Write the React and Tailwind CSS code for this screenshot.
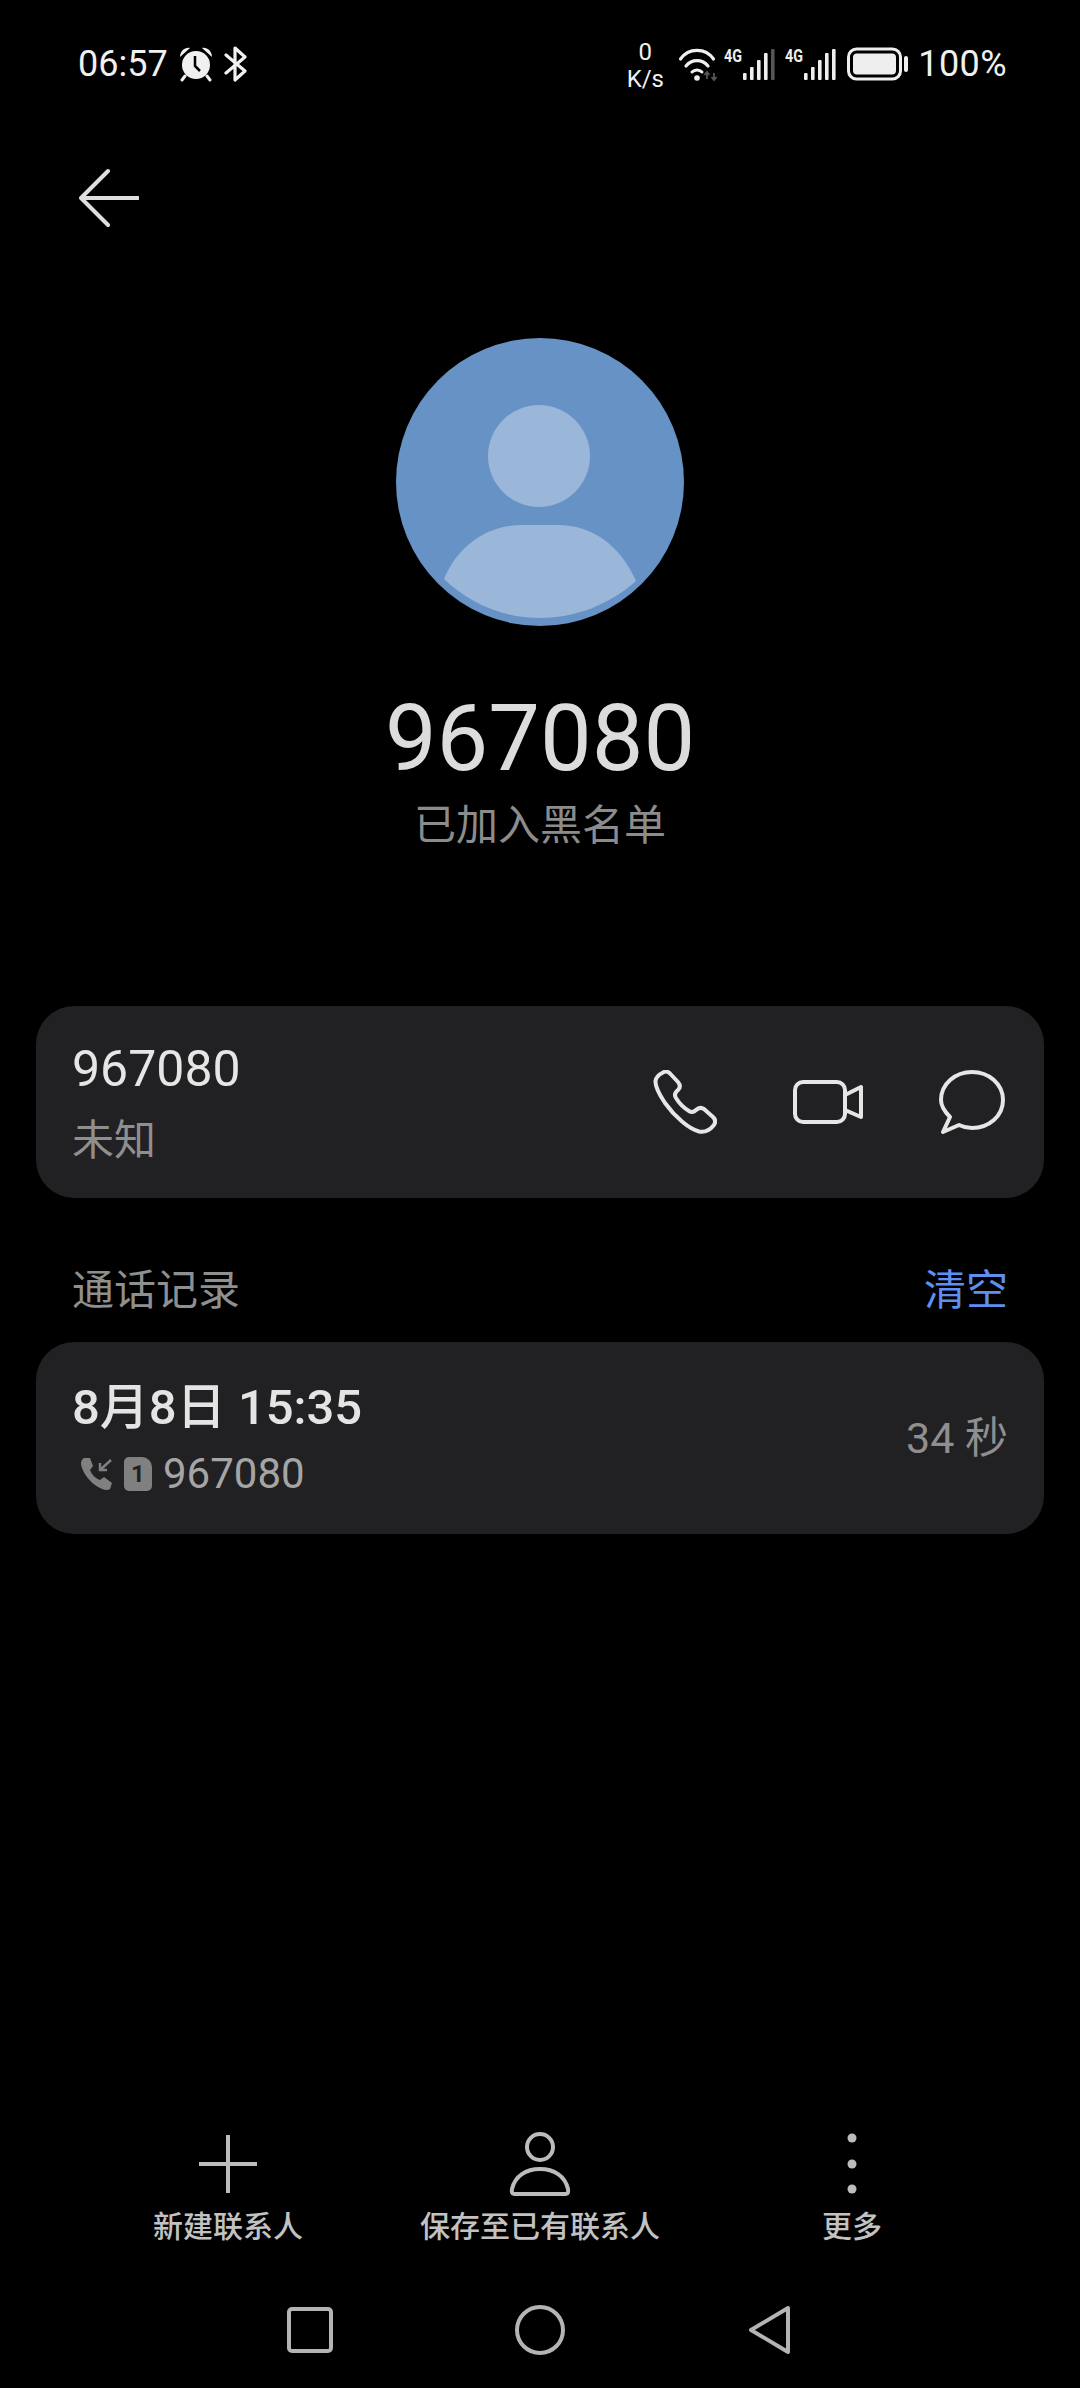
const cjk = 'font-[Roboto,"Noto_Sans_CJK_SC",sans-serif]'

const Signal = ({ lastDim }) => (
  <svg width="52" height="36" viewBox="0 0 52 36" className="block">
    <text x="0" y="16" fontFamily="Roboto" fontWeight="700" fontSize="18" fill="#eeeeee" textLength="18" lengthAdjust="spacingAndGlyphs">4G</text>
    <rect x="19" y="27" width="3.6" height="7" rx="1" fill="#eeeeee" />
    <rect x="26" y="21" width="3.6" height="13" rx="1" fill="#eeeeee" />
    <rect x="33" y="14" width="3.6" height="20" rx="1" fill="#eeeeee" />
    <rect x="40" y="7" width="3.6" height="27" rx="1" fill="#eeeeee" />
    <rect x="47" y="3" width="3.6" height="31" rx="1" fill={lastDim ? '#555555' : '#eeeeee'} />
  </svg>
)

const StatusBar = () => (
  <div className="flex h-[48px] mt-[40px] items-center justify-between pl-[78px] pr-[73px] text-[36px] leading-[48px] text-[#f0f0f0]">
    <div className="flex items-center">
      <span>06:57</span>
      <svg width="36" height="36" viewBox="0 0 36 36" className="ml-[10px]">
        <circle cx="18" cy="19" r="14" fill="#f0f0f0" />
        <path d="M2 11 C2 5 7 1 12 2 Z M34 11 C34 5 29 1 24 2 Z" fill="#f0f0f0" />
        <path d="M7 30 L4 34 M29 30 L32 34" stroke="#f0f0f0" strokeWidth="3" strokeLinecap="round" />
        <path d="M17 10 V20 L22 25" stroke="#000" strokeWidth="2.5" fill="none" />
      </svg>
      <svg width="24" height="36" viewBox="0 0 24 36" className="ml-[9px]">
        <path d="M3 9 L22 25 L12 34 V2 L22 11 L3 27" stroke="#f0f0f0" strokeWidth="3.2" fill="none" strokeLinejoin="round" strokeLinecap="round" />
      </svg>
    </div>
    <div className="flex items-center">
      <div className="flex flex-col items-center text-[24px] leading-[27px] w-[38px] pt-[4px] ml-[3px]">
        <span>0</span>
        <span>K/s</span>
      </div>
      <svg width="42" height="36" viewBox="0 0 42 36" className="ml-[13px]">
        <path d="M3.5 13 A20 20 0 0 1 36.5 13" stroke="#f0f0f0" strokeWidth="3.2" fill="none" strokeLinecap="round" />
        <path d="M9 20 A14 14 0 0 1 31 20" stroke="#f0f0f0" strokeWidth="3.2" fill="none" strokeLinecap="round" />
        <path d="M15 26 A7 7 0 0 1 25 26" stroke="#f0f0f0" strokeWidth="3" fill="none" strokeLinecap="round" />
        <circle cx="20" cy="32" r="2.8" fill="#f0f0f0" />
        <path d="M30 33 V27 M37 27 V33 M34.5 31 L37 34 L39.5 31 M27.5 29 L30 26 L32.5 29" stroke="#555555" strokeWidth="1.8" fill="none" />
      </svg>
      <div className="ml-[5px]"><Signal lastDim /></div>
      <div className="ml-[9px]"><Signal /></div>
      <svg width="62" height="34" viewBox="0 0 62 34" className="ml-[10px]">
        <rect x="1.5" y="2" width="52" height="30" rx="8" stroke="#eeeeee" strokeWidth="3" fill="none" />
        <rect x="6" y="6.5" width="43" height="21" rx="4" fill="#eeeeee" />
        <rect x="57" y="9" width="4" height="16" rx="2" fill="#eeeeee" />
      </svg>
      <span className="ml-[9px] tracking-[0.4px]">100%</span>
    </div>
  </div>
)

const PhoneIcon = () => (
  <svg width="64" height="64" viewBox="0 0 64 64">
    <path d="M10 2.5 C12 1 15 1.5 17 3.5 L25 12 C27.5 15 27.5 17.5 25 20 C22 22.5 21 25 23 28 C26 33 31 38 36 41 C39 43 41 42 43 40 C45.5 37.5 48 37 51 39 L60 47 C63 50 62.5 53 60.5 55.5 C57 60 52 62.5 46 61.5 C36 59 22 47 12 33 C6 24 2 17 2.5 11 C3 7 6 4.5 10 2.5 Z" stroke="#e6e6e6" strokeWidth="4" fill="none" strokeLinejoin="round" />
  </svg>
)

const VideoIcon = () => (
  <svg width="70" height="44" viewBox="0 0 70 44">
    <rect x="2" y="2" width="50" height="40" rx="8" stroke="#e6e6e6" strokeWidth="4" fill="none" />
    <path d="M52 15 L68 7 V37 L52 30" stroke="#e6e6e6" strokeWidth="4" fill="none" strokeLinejoin="round" />
  </svg>
)

const ChatIcon = () => (
  <svg width="66" height="64" viewBox="0 0 66 64">
    <path d="M4 62 L11 47 C5 41 2 36 2 30 C2 14 16 2 33 2 C50 2 64 14 64 30 C64 46 50 58 33 58 C28 58 24 57 20 55 Z" stroke="#e6e6e6" strokeWidth="4" fill="none" strokeLinejoin="round" />
  </svg>
)

const Card = ({ children }) => (
  <div className="mx-[36px] h-[192px] rounded-[38px] bg-[#212123] flex items-center justify-between pl-[36px]">
    {children}
  </div>
)

export default function App() {
  return (
    <div className={`w-[1080px] h-[2388px] bg-black flex flex-col ${cjk}`}>
      <StatusBar />

      <svg width="60" height="60" viewBox="0 0 60 60" className="ml-[79px] mt-[80px]">
        <path d="M29 3 L2 30 L29 57 M2 30 H59" stroke="#dedede" strokeWidth="4" fill="none" strokeLinecap="round" strokeLinejoin="round" />
      </svg>

      <svg width="288" height="288" viewBox="0 0 288 288" className="mx-auto mt-[110px]">
        <circle cx="144" cy="144" r="144" fill="#6792c5" />
        <circle cx="143" cy="118" r="51" fill="#9ab6d9" />
        <path d="M48 241 C62 207 92 187 126 187 L162 187 C196 187 224 207 240 243 C214 266 180 280 144 280 C108 280 74 266 48 241 Z" fill="#9ab6d9" />
      </svg>

      <div className="mt-[67px] text-center text-[92px] leading-[92px] text-[#dcdcdc]">967080</div>
      <div className="mt-[16px] text-center text-[42px] leading-[50px] text-[#8c8c8c]">已加入黑名单</div>

      <div className="mt-[155px]">
        <Card>
          <div className="flex flex-col">
            <span className="text-[50px] leading-[60px] text-[#e6e6e6]">967080</span>
            <span className="mt-[17px] text-[42px] leading-[50px] text-[#8f8f8f]">未知</span>
          </div>
          <div className="flex items-center gap-[76px] pr-[39px]">
            <PhoneIcon />
            <VideoIcon />
            <ChatIcon />
          </div>
        </Card>
      </div>

      <div className="mt-[68px] mx-[72px] flex items-center justify-between text-[42px] leading-[50px]">
        <span className="text-[#8f8f8f]">通话记录</span>
        <span className="text-[#5f8ff0]">清空</span>
      </div>

      <div className="mt-[26px]">
        <Card>
          <div className="flex flex-col">
            <span className="text-[49px] leading-[60px] font-medium text-[#e4e4e4]">8月8日 15:35</span>
            <div className="mt-[11px] flex items-center h-[50px] text-[42px] leading-[50px] text-[#a5a5a5]">
              <svg width="34" height="34" viewBox="0 0 34 34" className="ml-[8px]">
                <path d="M4 1 L10 1 L13 9 L10 13 C12 18 15 21 20 23 L24 20 L32 26 L30 32 C28 34 22 33 15 28 C8 23 2 14 1 7 C1 4 2 2 4 1 Z" fill="#808080" />
                <path d="M31 3 L20 13 M20 6 V13 H27" stroke="#808080" strokeWidth="2.4" fill="none" />
              </svg>
              <span className="ml-[10px] w-[28px] h-[34px] bg-[#808080] rounded-[5px] rounded-tr-[10px] flex items-center justify-center text-[24px] leading-[34px] font-bold text-[#212123]">1</span>
              <span className="ml-[11px]">967080</span>
            </div>
          </div>
          <span className="pr-[36px] text-[43px] leading-[50px] text-[#8f8f8f]">34 秒</span>
        </Card>
      </div>

      <div className="mt-auto pb-[33px]">
        <div className="grid grid-cols-3 px-[72px] text-[30px] leading-[40px] font-medium text-[#c2c2c2]">
          <div className="flex flex-col items-center">
            <svg width="64" height="64" viewBox="0 0 64 64">
              <path d="M32 3 V61 M3 32 H61" stroke="#bcbcbc" strokeWidth="4" fill="none" />
            </svg>
            <span className="mt-[11px]">新建联系人</span>
          </div>
          <div className="flex flex-col items-center">
            <svg width="64" height="64" viewBox="0 0 64 64">
              <circle cx="32" cy="15" r="13" stroke="#bcbcbc" strokeWidth="4" fill="none" />
              <path d="M6 62 C4 62 3.5 60 4 57 C7 44 18 37 32 37 C46 37 57 44 60 57 C60.5 60 60 62 58 62 Z" stroke="#bcbcbc" strokeWidth="4" fill="none" strokeLinejoin="round" />
            </svg>
            <span className="mt-[11px]">保存至已有联系人</span>
          </div>
          <div className="flex flex-col items-center">
            <svg width="64" height="64" viewBox="0 0 64 64">
              <circle cx="32" cy="6" r="4.5" fill="#bcbcbc" />
              <circle cx="32" cy="32" r="4.5" fill="#bcbcbc" />
              <circle cx="32" cy="57" r="4.5" fill="#bcbcbc" />
            </svg>
            <span className="mt-[11px]">更多</span>
          </div>
        </div>

        <div className="mt-[58px] grid grid-cols-3 px-[195px] justify-items-center">
          <svg width="46" height="50" viewBox="0 0 46 50">
            <rect x="2" y="4" width="42" height="42" rx="3" stroke="#b4b4b4" strokeWidth="4" fill="none" />
          </svg>
          <svg width="50" height="50" viewBox="0 0 50 50">
            <circle cx="25" cy="25" r="23" stroke="#b4b4b4" strokeWidth="4" fill="none" />
          </svg>
          <svg width="44" height="50" viewBox="0 0 44 50">
            <path d="M40 3 L3 25 L40 47 Z" stroke="#b4b4b4" strokeWidth="4" fill="none" strokeLinejoin="round" />
          </svg>
        </div>
      </div>
    </div>
  )
}
